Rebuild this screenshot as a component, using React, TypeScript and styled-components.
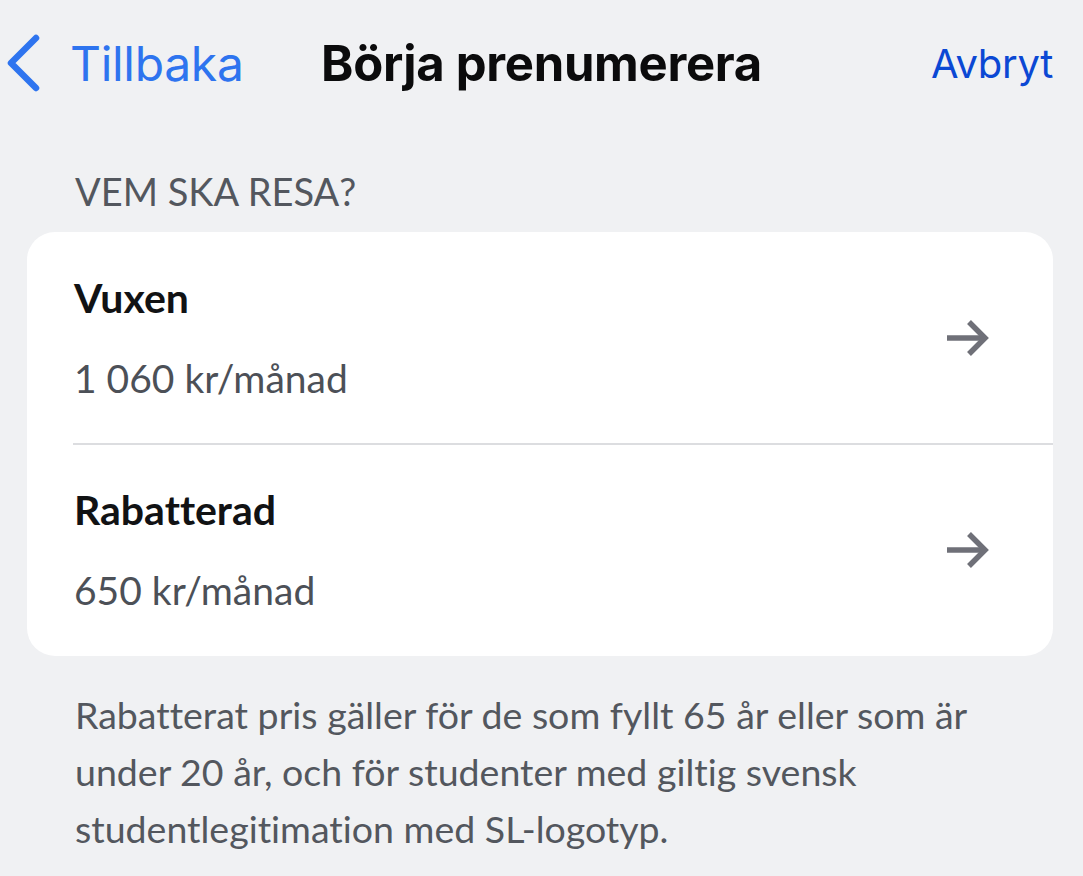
import React from "react";
import styled, { createGlobalStyle } from "styled-components";

const GlobalStyle = createGlobalStyle`
  html, body {
    margin: 0;
    padding: 0;
    background: #f0f1f3;
  }
  body {
    width: 1083px;
    height: 876px;
    overflow: hidden;
  }
`;

const Page = styled.div`
  width: 1083px;
  height: 876px;
  background: #f0f1f3;
  box-sizing: border-box;
  display: flex;
  flex-direction: column;
`;

const NavBar = styled.div`
  height: 126px;
  display: grid;
  grid-template-columns: 1fr auto 1fr;
  align-items: center;
  padding: 0 30px;
  font-family: Inter, "Noto Sans", sans-serif;
`;

const BackButton = styled.div`
  display: flex;
  align-items: center;
  gap: 30px;
  margin-left: -24px;
  color: #2e74ef;
  font-size: 48px;
  letter-spacing: -0.3px;
`;

const Title = styled.div`
  font-size: 49px;
  font-weight: 700;
  color: #0b0b0c;
  letter-spacing: -0.3px;
`;

const CancelButton = styled.div`
  justify-self: end;
  color: #0b48d4;
  font-size: 40px;
  letter-spacing: -0.3px;
`;

const Content = styled.div`
  padding: 0 30px 0 27px;
  font-family: Lato, "Open Sans", sans-serif;
  font-variant-ligatures: none;
`;

const SectionLabel = styled.div`
  padding-left: 48px;
  color: #53575e;
  font-size: 38px;
  line-height: 46px;
  margin-top: 42px;
  margin-bottom: 18px;
`;

const Card = styled.div`
  background: #ffffff;
  border-radius: 28px;
  overflow: hidden;
`;

const Row = styled.div`
  display: flex;
  align-items: center;
  height: 211px;
  padding-left: 47px;
  padding-right: 62px;
`;

const RowText = styled.div`
  flex: 1;
  display: flex;
  flex-direction: column;
  gap: 36px;
`;

const RowTitle = styled.div`
  font-size: 41px;
  font-weight: 700;
  color: #111214;
  line-height: 44px;
`;

const RowPrice = styled.div`
  font-size: 39px;
  color: #4c5057;
  line-height: 44px;
`;

const Divider = styled.div`
  height: 1.5px;
  background: #dcdde0;
  margin-left: 46px;
`;

const Footnote = styled.p`
  margin: 30px 0 0;
  padding-left: 48px;
  padding-right: 40px;
  color: #53575e;
  font-size: 37.5px;
  line-height: 57px;
`;

const ArrowIcon = () => (
  <svg width="46" height="40" viewBox="0 0 46 40" fill="none">
    <path d="M2 20H40" stroke="#6f7078" strokeWidth="5.5" />
    <path d="M24 4L40 20L24 36" stroke="#6f7078" strokeWidth="5.5" />
  </svg>
);

const ChevronLeft = () => (
  <svg width="34" height="58" viewBox="0 0 34 58" fill="none">
    <path
      d="M30 4L5 29L30 54"
      stroke="#2e74ef"
      strokeWidth="6.5"
      strokeLinecap="round"
      strokeLinejoin="round"
    />
  </svg>
);

const options = [
  { title: "Vuxen", price: "1 060 kr/månad" },
  { title: "Rabatterad", price: "650 kr/månad" },
];

export default function App() {
  return (
    <Page>
      <GlobalStyle />
      <NavBar>
        <BackButton>
          <ChevronLeft />
          <span>Tillbaka</span>
        </BackButton>
        <Title>Börja prenumerera</Title>
        <CancelButton>Avbryt</CancelButton>
      </NavBar>
      <Content>
        <SectionLabel>VEM SKA RESA?</SectionLabel>
        <Card>
          {options.map((o, i) => (
            <React.Fragment key={o.title}>
              {i > 0 && <Divider />}
              <Row>
                <RowText>
                  <RowTitle>{o.title}</RowTitle>
                  <RowPrice>{o.price}</RowPrice>
                </RowText>
                <ArrowIcon />
              </Row>
            </React.Fragment>
          ))}
        </Card>
        <Footnote>
          Rabatterat pris gäller för de som fyllt 65 år eller som är under 20
          år, och för studenter med giltig svensk studentlegitimation med
          SL-logotyp.
        </Footnote>
      </Content>
    </Page>
  );
}
